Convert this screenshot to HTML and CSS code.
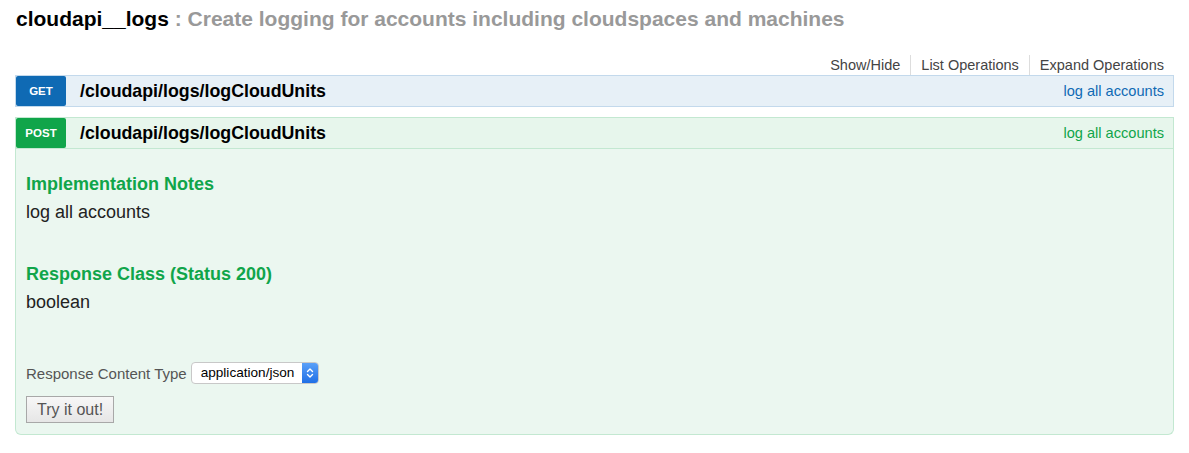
FILE: index.html
```html
<!DOCTYPE html>
<html>
<head>
<meta charset="utf-8">
<link rel="stylesheet" href="styles.css">
</head>
<body>
<div class="resource">
  <div class="heading">
    <h2><span class="res-name">cloudapi__logs</span> <span class="res-desc">: Create logging for accounts including cloudspaces and machines</span></h2>
  </div>
  <ul class="options">
    <li>Show/Hide</li>
    <li>List Operations</li>
    <li>Expand Operations</li>
  </ul>
  <div class="endpoints">
    <div class="operation get">
      <div class="op-heading">
        <span class="method">GET</span>
        <span class="path">/cloudapi/logs/logCloudUnits</span>
        <span class="summary">log all accounts</span>
      </div>
    </div>
    <div class="operation post">
      <div class="op-heading">
        <span class="method">POST</span>
        <span class="path">/cloudapi/logs/logCloudUnits</span>
        <span class="summary">log all accounts</span>
      </div>
      <div class="content">
        <h4 class="sec-title first">Implementation Notes</h4>
        <p class="sec-text">log all accounts</p>
        <h4 class="sec-title">Response Class (Status 200)</h4>
        <p class="sec-text">boolean</p>
        <div class="ctype-row">
          <span class="ctype-label">Response Content Type</span>
          <span class="select">
            <span class="select-value">application/json</span>
            <span class="select-arrows">
              <svg width="8" height="12" viewBox="0 0 8 12"><path d="M1.5 4.5 L4 2 L6.5 4.5 M1.5 7.5 L4 10 L6.5 7.5" fill="none" stroke="#fff" stroke-width="1.4" stroke-linecap="round" stroke-linejoin="round"/></svg>
            </span>
          </span>
        </div>
        <button class="try-btn">Try it out!</button>
      </div>
    </div>
  </div>
</div>
</body>
</html>
```

FILE: styles.css
```css
* { box-sizing: border-box; }
body {
  margin: 0;
  font-family: "Liberation Sans", Arial, Helvetica, sans-serif;
  color: #222;
  background: #fff;
}
.heading {
  padding: 7px 16px 0;
}
.heading h2 {
  margin: 0;
  font-size: 21px;
  line-height: 24px;
  font-weight: bold;
}
.res-name { color: #000; }
.res-desc { color: #999; }
.options {
  list-style: none;
  margin: 24px 0 0;
  padding: 0 25px 0 0;
  display: flex;
  justify-content: flex-end;
  font-size: 14.5px;
  line-height: 20px;
  color: #444;
}
.options li {
  padding: 0 10px;
  border-left: 1px solid #ddd;
}
.options li:first-child { border-left: none; }
.options li:last-child { padding-right: 0; }
.endpoints {
  margin: 0 15px;
}
.operation + .operation { margin-top: 10px; }
.op-heading {
  display: flex;
  align-items: center;
  height: 32px;
  border: 1px solid;
}
.get .op-heading { background: #e7f0f7; border-color: #c3d9ec; }
.post .op-heading { background: #e7f6ec; border-color: #c3e8d1; }
.method {
  width: 50px;
  height: 30px;
  display: flex;
  align-items: center;
  justify-content: center;
  color: #fff;
  font-weight: bold;
  font-size: 11.5px;
  border-radius: 2px;
}
.get .method { background: #0f6ab4; }
.post .method { background: #10a54a; }
.path {
  margin-left: 14px;
  font-weight: bold;
  font-size: 17.8px;
  color: #000;
  flex: 1;
}
.summary {
  font-size: 14.6px;
  padding-right: 9px;
}
.get .summary { color: #0f6ab4; }
.post .summary { color: #10a54a; }
.content {
  background: #ebf7f0;
  border: 1px solid #c3e8d1;
  border-top: none;
  border-radius: 0 0 6px 6px;
  padding: 24px 10px 11px;
}
.sec-title {
  margin: 40px 0 0;
  font-size: 18px;
  line-height: 22px;
  color: #10a54a;
  font-weight: bold;
}
.sec-title.first { margin-top: 0; }
.sec-text {
  margin: 6px 0 0;
  font-size: 18px;
  line-height: 22px;
  color: #222;
}
.ctype-row {
  margin-top: 49px;
  display: flex;
  align-items: center;
  height: 22px;
}
.ctype-label {
  font-size: 15px;
  color: #555;
  margin-right: 4px;
}
.select {
  display: flex;
  align-items: stretch;
  width: 128px;
  height: 22px;
  border: 1px solid #c8c8c8;
  border-radius: 4px;
  background: #fff;
  overflow: hidden;
}
.select-value {
  flex: 1;
  font-size: 13.6px;
  line-height: 20px;
  padding-left: 9px;
  color: #000;
  white-space: nowrap;
}
.select-arrows {
  width: 16px;
  display: flex;
  align-items: center;
  justify-content: center;
  background: linear-gradient(#5aa0f8, #1f6fe6);
}
.try-btn {
  display: block;
  margin-top: 12px;
  height: 27px;
  padding: 0 10px;
  font-family: inherit;
  font-size: 16px;
  color: #555;
  background: linear-gradient(#f7f7f7, #e6e6e6);
  border: 1px solid #a8a8a8;
  border-radius: 0;
}
```
